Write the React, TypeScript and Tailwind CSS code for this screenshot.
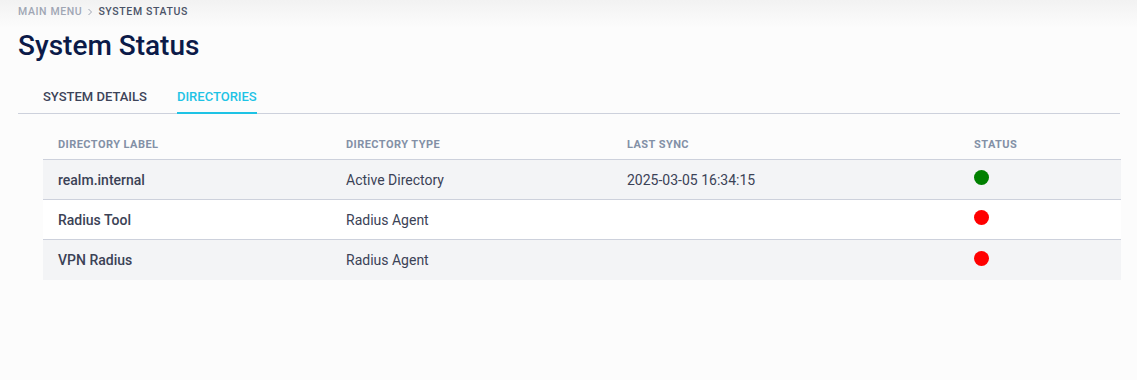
import React from "react";

const rows = [
  { label: "realm.internal", type: "Active Directory", sync: "2025-03-05 16:34:15", ok: true },
  { label: "Radius Tool", type: "Radius Agent", sync: "", ok: false },
  { label: "VPN Radius", type: "Radius Agent", sync: "", ok: false },
];

export default function App() {
  return (
    <div
      className="relative w-[1137px] h-[380px] bg-[#fcfcfc] overflow-hidden"
      style={{ fontFamily: "Roboto, 'Noto Sans', sans-serif" }}
    >
      <div className="absolute inset-x-0 top-0 h-[28px] bg-gradient-to-b from-[#f2f2f2] to-[#fcfcfc]" />
      <div className="relative pl-[18px] pr-[17px] pt-[5px]">
        <div className="flex items-center gap-[4px] text-[10.5px] font-medium tracking-[0.06em] leading-[14px]">
          <span className="text-[#a0a6b4]">MAIN MENU</span>
          <svg width="8" height="8" viewBox="0 0 8 8" className="text-[#a0a6b4]">
            <path d="M2.5 1 L5.5 4 L2.5 7" fill="none" stroke="currentColor" strokeWidth="1" />
          </svg>
          <span className="text-[#4b5368]">SYSTEM STATUS</span>
        </div>
        <h1 className="mt-[11px] text-[28px] leading-[32px] font-medium text-[#0b1a48]">System Status</h1>
        <div className="mt-[27px] flex border-b border-[#cdd1dc] pl-[25px] gap-[30px]">
          <div className="pb-[8px] text-[13px] font-medium leading-[16px] text-[#3c4358]">SYSTEM DETAILS</div>
          <div className="relative pb-[8px] text-[13px] font-medium leading-[16px] text-[#1ec3e5]">
            DIRECTORIES
            <div className="absolute left-0 right-0 bottom-[-1px] h-[2px] bg-[#1ec3e5]" />
          </div>
        </div>
        <div className="ml-[25px] mt-[24px] w-[1078px]">
          <div className="grid grid-cols-[303px_281px_347px_1fr] border-b border-[#cdd1dc] pb-[7px] text-[11px] font-bold tracking-[0.04em] text-[#8390a6] leading-[14px]">
            <div className="pl-[15px]">DIRECTORY LABEL</div>
            <div>DIRECTORY TYPE</div>
            <div>LAST SYNC</div>
            <div>STATUS</div>
          </div>
          {rows.map((r, i) => (
            <div
              key={i}
              className={`grid grid-cols-[303px_281px_347px_1fr] items-center h-[40px] text-[14px] leading-[20px] text-[#3b4256] ${
                i < rows.length - 1 ? "border-b border-[#cdd1dc]" : ""
              } ${i % 2 === 0 ? "bg-[#f3f4f6]" : "bg-white"}`}
            >
              <div className="pl-[15px] font-medium">{r.label}</div>
              <div>{r.type}</div>
              <div>{r.sync}</div>
              <div className="flex items-center -mt-[4px]">
                <span
                  className={`block w-[15px] h-[15px] rounded-full ${r.ok ? "bg-[#008000]" : "bg-[#ff0000]"}`}
                />
              </div>
            </div>
          ))}
        </div>
      </div>
    </div>
  );
}
